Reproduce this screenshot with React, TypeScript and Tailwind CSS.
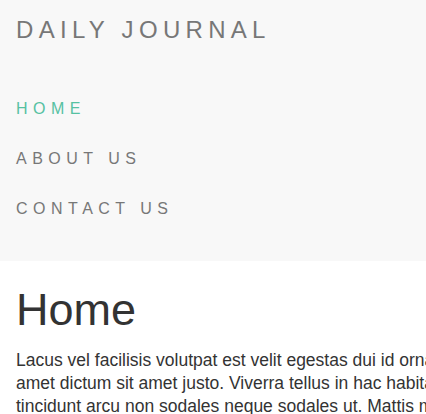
const navItems = [
  { label: "Home", active: true },
  { label: "About Us", active: false },
  { label: "Contact Us", active: false },
];

const lines = [
  "Lacus vel facilisis volutpat est velit egestas dui id ornare arcu. Ut sit",
  "amet dictum sit amet justo. Viverra tellus in hac habitasse platea dictumst.",
  "tincidunt arcu non sodales neque sodales ut. Mattis molestie a iaculis at erat.",
];

export default function App() {
  return (
    <div className="w-[426px] h-[414px] overflow-hidden bg-white font-['Liberation_Sans',Arial,sans-serif]">
      <nav className="bg-[#f8f8f8] h-[261px] px-4">
        <div className="pt-[15px] text-[24px] leading-[30px] tracking-[5.3px] uppercase text-[#777]">
          Daily Journal
        </div>
        <ul className="mt-[39px] flex flex-col">
          {navItems.map((item) => (
            <li key={item.label} className="h-[50px] flex items-center">
              <a
                href="#"
                className={
                  "text-[16px] uppercase tracking-[5.5px] " +
                  (item.active ? "text-[#56c1a2]" : "text-[#777]")
                }
              >
                {item.label}
              </a>
            </li>
          ))}
        </ul>
      </nav>
      <main className="px-4">
        <h1 className="mt-[22px] text-[45px] leading-[54px] text-[#333]">Home</h1>
        <p className="mt-[12px] text-[17.5px] leading-[23px] text-[#333] whitespace-nowrap">
          {lines.map((line) => (
            <span key={line} className="block">
              {line}
            </span>
          ))}
        </p>
      </main>
    </div>
  );
}
